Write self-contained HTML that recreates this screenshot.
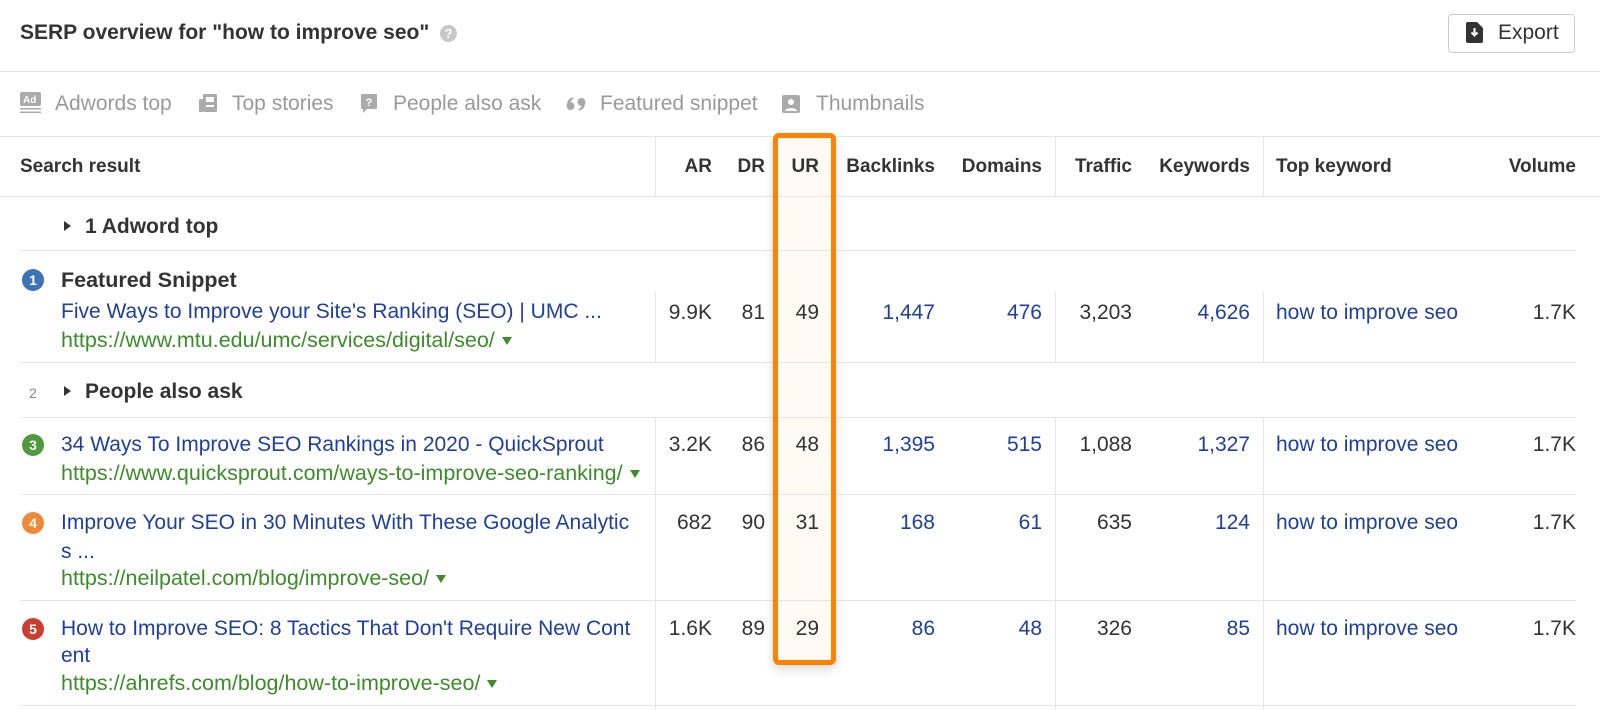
<!DOCTYPE html>
<html><head><meta charset="utf-8"><style>
body{margin:0;width:1600px;height:710px;background:#fff;font-family:"Liberation Sans",Arial,sans-serif;color:#333;position:relative;overflow:hidden}
.a{position:absolute;white-space:nowrap;line-height:24px}
.h{position:absolute;left:0;width:1600px;height:1px;background:#e6e6e6}
.v{position:absolute;width:1px;background:#e6e6e6}
.hd{font-weight:bold;font-size:19px}
.d{font-size:21px}
.r{text-align:right}
.lk{color:#1f3f9b}
.url{color:#3d8b2c;font-size:21.5px}
.tb{color:#999;font-size:21px}
.c{position:absolute;width:22px;height:22px;border-radius:50%;color:#fff;font-size:14px;font-weight:bold;text-align:center;line-height:22px}
.tri{display:inline-block;width:0;height:0;border-left:7px solid #333;border-top:5px solid transparent;border-bottom:5px solid transparent;margin-right:14px;vertical-align:2px}
.dn{display:inline-block;width:0;height:0;border-top:8px solid #3d8b2c;border-left:5px solid transparent;border-right:5px solid transparent;margin-left:7px;vertical-align:2px}
</style></head><body>
<div class="a" style="left:20px;top:21px;font-size:21px;font-weight:bold;color:#333">SERP overview for "how to improve seo"</div>
<div class="a" style="left:440px;top:25px;width:17px;height:17px;border-radius:50%;background:#c8c8c8;color:#fff;font-size:13px;font-weight:bold;line-height:17px;text-align:center">?</div>
<div style="position:absolute;left:1448px;top:14px;width:125px;height:37px;border:1px solid #ccc;border-radius:4px"></div>
<svg style="position:absolute;left:1466px;top:22px" width="17" height="21" viewBox="0 0 17 21"><path d="M2 0h9l6 6v13a2 2 0 0 1-2 2H2a2 2 0 0 1-2-2V2a2 2 0 0 1 2-2z" fill="#333"/><path d="M8.5 6v7M5.5 10.5l3 3 3-3" stroke="#fff" stroke-width="2" fill="none"/></svg>
<div class="a" style="left:1498px;top:21px;font-size:21px;color:#333">Export</div>
<div class="h" style="top:71px"></div>

<svg style="position:absolute;left:20px;top:92px" width="22" height="22" viewBox="0 0 22 22"><rect x="0" y="0" width="21" height="14" rx="2" fill="#aaa"/><text x="3" y="11" font-size="10" font-weight="bold" fill="#fff" font-family="Liberation Sans">Ad</text><rect y="16" width="21" height="1.5" fill="#aaa"/><rect y="19.5" width="21" height="1.5" fill="#aaa"/></svg>
<div class="a tb" style="left:55px;top:92px">Adwords top</div>
<svg style="position:absolute;left:199px;top:94px" width="18" height="18" viewBox="0 0 18 18"><rect x="4" y="0" width="14" height="18" rx="1.5" fill="#aaa"/><rect x="0" y="5" width="4" height="13" rx="1" fill="#aaa"/><rect x="7" y="3" width="8" height="5" fill="#fff"/><rect x="7" y="11" width="8" height="2" fill="#fff"/></svg>
<div class="a tb" style="left:232px;top:92px">Top stories</div>
<svg style="position:absolute;left:361px;top:94px" width="16" height="20" viewBox="0 0 16 20"><path d="M1 0h14a1 1 0 0 1 1 1v13a1 1 0 0 1-1 1H6l-4 4v-4H1a1 1 0 0 1-1-1V1a1 1 0 0 1 1-1z" fill="#aaa"/><text x="4.5" y="12" font-size="11" font-weight="bold" fill="#fff" font-family="Liberation Sans">?</text></svg>
<div class="a tb" style="left:393px;top:92px">People also ask</div>
<svg style="position:absolute;left:566px;top:97px" width="20" height="14" viewBox="0 0 20 14"><circle cx="4.5" cy="9" r="4" fill="#aaa"/><path d="M1 8C1 3 4 1 7 0.5L7.5 2C5 3 4 5 4.5 6z" fill="#aaa"/><circle cx="15.5" cy="5" r="4" fill="#aaa"/><path d="M19 6C19 11 16 13 13 13.5L12.5 12C15 11 16 9 15.5 8z" fill="#aaa"/></svg>
<div class="a tb" style="left:600px;top:92px">Featured snippet</div>
<svg style="position:absolute;left:782px;top:95px" width="18" height="18" viewBox="0 0 18 18"><rect width="18" height="18" rx="2" fill="#aaa"/><circle cx="9" cy="7" r="3" fill="#fff"/><path d="M3 16c1-4 11-4 12 0z" fill="#fff"/></svg>
<div class="a tb" style="left:816px;top:92px">Thumbnails</div>
<div class="h" style="top:136px"></div>

<div style="position:absolute;left:773px;top:133px;width:63px;height:532px;background:#fffaf3"></div>

<div class="a hd" style="left:20px;top:155px">Search result</div>
<div class="a hd r" style="right:888px;top:155px">AR</div>
<div class="a hd r" style="right:835px;top:155px">DR</div>
<div class="a hd r" style="right:781px;top:155px">UR</div>
<div class="a hd r" style="right:665px;top:155px">Backlinks</div>
<div class="a hd r" style="right:558px;top:155px">Domains</div>
<div class="a hd r" style="right:468px;top:155px">Traffic</div>
<div class="a hd r" style="right:350px;top:155px">Keywords</div>
<div class="a hd" style="left:1276px;top:155px">Top keyword</div>
<div class="a hd r" style="right:24px;top:155px">Volume</div>
<div class="v" style="left:655px;top:136px;height:60px"></div>
<div class="v" style="left:1055px;top:136px;height:60px"></div>
<div class="v" style="left:1263px;top:136px;height:60px"></div>
<div class="h" style="top:196px"></div>

<div class="a" style="left:64px;top:215px;font-size:21px;font-weight:bold"><span class="tri"></span>1 Adword top</div>
<div class="h" style="top:250px;left:20px;width:1556px"></div>

<div class="c" style="left:22px;top:269px;background:#3d74b5">1</div>
<div class="a" style="left:61px;top:268px;font-size:21.5px;font-weight:bold">Featured Snippet</div>
<div class="a d lk" style="left:61px;top:300px">Five Ways to Improve your Site's Ranking (SEO) | UMC ...</div>
<div class="a url" style="left:61px;top:328px">https://www.mtu.edu/umc/services/digital/seo/<span class="dn"></span></div>
<div class="h" style="top:362px;left:20px;width:1556px"></div>

<div class="a" style="left:29px;top:381px;font-size:14px;color:#888">2</div>
<div class="a" style="left:64px;top:380px;font-size:21px;font-weight:bold"><span class="tri"></span>People also ask</div>
<div class="h" style="top:417px;left:20px;width:1556px"></div>

<div class="c" style="left:22px;top:434px;background:#4f9a3d">3</div>
<div class="a d lk" style="left:61px;top:433px">34 Ways To Improve SEO Rankings in 2020 - QuickSprout</div>
<div class="a url" style="left:61px;top:461px">https://www.quicksprout.com/ways-to-improve-seo-ranking/<span class="dn"></span></div>
<div class="h" style="top:494px;left:20px;width:1556px"></div>

<div class="c" style="left:22px;top:512px;background:#f0883a">4</div>
<div class="a d lk" style="left:61px;top:511px">Improve Your SEO in 30 Minutes With These Google Analytic</div>
<div class="a d lk" style="left:61px;top:540px">s ...</div>
<div class="a url" style="left:61px;top:566px">https://neilpatel.com/blog/improve-seo/<span class="dn"></span></div>
<div class="h" style="top:600px;left:20px;width:1556px"></div>

<div class="c" style="left:22px;top:618px;background:#c9402f">5</div>
<div class="a d lk" style="left:61px;top:617px">How to Improve SEO: 8 Tactics That Don't Require New Cont</div>
<div class="a d lk" style="left:61px;top:644px">ent</div>
<div class="a url" style="left:61px;top:671px">https://ahrefs.com/blog/how-to-improve-seo/<span class="dn"></span></div>
<div class="h" style="top:705px;left:20px;width:1556px"></div>

<div class="v" style="left:655px;top:292px;height:70px"></div>
<div class="v" style="left:1055px;top:292px;height:70px"></div>
<div class="v" style="left:1263px;top:292px;height:70px"></div>
<div class="v" style="left:655px;top:417px;height:293px"></div>
<div class="v" style="left:1055px;top:417px;height:293px"></div>
<div class="v" style="left:1263px;top:417px;height:293px"></div>

<div style="position:absolute;left:0;top:301px;width:1600px">
<div class="a d r" style="right:888px">9.9K</div><div class="a d r" style="right:835px">81</div><div class="a d r" style="right:781px">49</div>
<div class="a d r lk" style="right:665px">1,447</div><div class="a d r lk" style="right:558px">476</div><div class="a d r" style="right:468px">3,203</div>
<div class="a d r lk" style="right:350px">4,626</div><div class="a d lk" style="left:1276px">how to improve seo</div><div class="a d r" style="right:24px">1.7K</div></div>
<div style="position:absolute;left:0;top:433px;width:1600px">
<div class="a d r" style="right:888px">3.2K</div><div class="a d r" style="right:835px">86</div><div class="a d r" style="right:781px">48</div>
<div class="a d r lk" style="right:665px">1,395</div><div class="a d r lk" style="right:558px">515</div><div class="a d r" style="right:468px">1,088</div>
<div class="a d r lk" style="right:350px">1,327</div><div class="a d lk" style="left:1276px">how to improve seo</div><div class="a d r" style="right:24px">1.7K</div></div>
<div style="position:absolute;left:0;top:511px;width:1600px">
<div class="a d r" style="right:888px">682</div><div class="a d r" style="right:835px">90</div><div class="a d r" style="right:781px">31</div>
<div class="a d r lk" style="right:665px">168</div><div class="a d r lk" style="right:558px">61</div><div class="a d r" style="right:468px">635</div>
<div class="a d r lk" style="right:350px">124</div><div class="a d lk" style="left:1276px">how to improve seo</div><div class="a d r" style="right:24px">1.7K</div></div>
<div style="position:absolute;left:0;top:617px;width:1600px">
<div class="a d r" style="right:888px">1.6K</div><div class="a d r" style="right:835px">89</div><div class="a d r" style="right:781px">29</div>
<div class="a d r lk" style="right:665px">86</div><div class="a d r lk" style="right:558px">48</div><div class="a d r" style="right:468px">326</div>
<div class="a d r lk" style="right:350px">85</div><div class="a d lk" style="left:1276px">how to improve seo</div><div class="a d r" style="right:24px">1.7K</div></div>

<div style="position:absolute;left:773px;top:133px;width:53px;height:522px;border:5px solid #ff8200;border-radius:6px;box-shadow:0 4px 10px rgba(0,0,0,0.15)"></div>
</body></html>
